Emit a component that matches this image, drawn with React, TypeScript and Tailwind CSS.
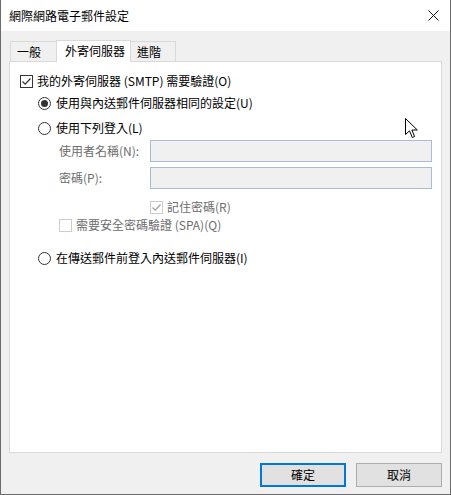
import React from "react";

const font = { fontFamily: '"Noto Sans CJK TC", "Microsoft JhengHei", sans-serif' };

const Radio = ({ checked }: { checked?: boolean }) => (
  <span className="w-[13px] h-[13px] rounded-full border border-[#333333] bg-white flex items-center justify-center shrink-0">
    {checked && <span className="w-[7px] h-[7px] rounded-full bg-[#333333]" />}
  </span>
);

const Check = ({ checked, disabled }: { checked?: boolean; disabled?: boolean }) => (
  <span
    className={`w-[13px] h-[13px] border bg-white flex items-center justify-center shrink-0 ${
      disabled ? "border-[#cccccc]" : "border-[#333333]"
    }`}
  >
    {checked && (
      <svg width="11" height="11" viewBox="0 0 11 11">
        <path d="M1.5 5.5 L4.2 8.2 L9.5 2.5" fill="none" stroke={disabled ? "#a0a0a0" : "#333"} strokeWidth="1.2" />
      </svg>
    )}
  </span>
);

export default function App() {
  return (
    <div
      className="relative w-[451px] h-[495px] bg-[#f0f0f0] text-[12px] text-black flex flex-col border-l border-r border-b border-[#6b6b6b] overflow-hidden"
      style={font}
    >
      {/* title bar */}
      <div className="h-[31px] bg-white flex items-center justify-between pl-[8px] pr-[10px] shrink-0">
        <span className="text-[12px] leading-none">網際網路電子郵件設定</span>
        <svg width="11" height="11" viewBox="0 0 11 11" className="mr-[1px]">
          <path d="M0.5 0.5 L10.5 10.5 M10.5 0.5 L0.5 10.5" stroke="#111" strokeWidth="1" />
        </svg>
      </div>

      {/* tabs */}
      <div className="flex items-end pl-[9px] pt-[8px] h-[30px] shrink-0">
        <div className="w-[48px] h-[20px] pl-[6px] flex items-center border border-b-0 border-[#d9d9d9] bg-[#f0f0f0] leading-none pt-[1px]">一般</div>
        <div className="relative z-10 w-[75px] h-[22px] mb-[-1px] pl-[8px] flex items-center border border-b-0 border-[#d9d9d9] bg-white leading-none ml-[-2px] pb-[1px]">
          外寄伺服器
        </div>
        <div className="w-[45px] h-[20px] pl-[6px] flex items-center border border-b-0 border-l-0 border-[#d9d9d9] bg-[#f0f0f0] leading-none pt-[1px]">進階</div>
      </div>

      {/* panel */}
      <div className="ml-[8px] mr-[8px] h-[392px] bg-white border border-[#d9d9d9] shrink-0 pt-[12px] pl-[10px] leading-none">
        <div className="flex items-center gap-[4px] h-[14px]">
          <Check checked />
          <span>我的外寄伺服器 (SMTP) 需要驗證(O)</span>
        </div>
        <div className="pl-[18px]">
          <div className="flex items-center gap-[5px] h-[14px] mt-[8px]">
            <Radio checked />
            <span>使用與內送郵件伺服器相同的設定(U)</span>
          </div>
          <div className="flex items-center gap-[5px] h-[14px] mt-[11px]">
            <Radio />
            <span>使用下列登入(L)</span>
          </div>
          <div className="pl-[21px] text-[#6d6d6d]">
            <div className="flex items-center mt-[5px] h-[22px]">
              <span className="w-[91px]">使用者名稱(N):</span>
              <div className="w-[282px] h-[22px] bg-[#f0f0f0] border border-[#a9bcd6]" />
            </div>
            <div className="flex items-center mt-[5px] h-[22px]">
              <span className="w-[91px]">密碼(P):</span>
              <div className="w-[282px] h-[22px] bg-[#f0f0f0] border border-[#a9bcd6]" />
            </div>
            <div className="flex items-center gap-[4px] h-[14px] mt-[11px] pl-[91px]">
              <Check checked disabled />
              <span>記住密碼(R)</span>
            </div>
            <div className="flex items-center gap-[4px] h-[14px] mt-[4px]">
              <Check disabled />
              <span>需要安全密碼驗證 (SPA)(Q)</span>
            </div>
          </div>
          <div className="flex items-center gap-[5px] h-[14px] mt-[19px]">
            <Radio />
            <span>在傳送郵件前登入內送郵件伺服器(I)</span>
          </div>
        </div>
      </div>

      {/* buttons */}
      <div className="flex justify-end gap-[10px] pr-[8px] pt-[10px]">
        <button className="w-[86px] h-[24px] bg-[#e1e1e1] border-2 border-[#0078d7] leading-none" style={font}>
          確定
        </button>
        <button className="w-[86px] h-[24px] bg-[#e1e1e1] border border-[#adadad] leading-none" style={font}>
          取消
        </button>
      </div>

      {/* mouse cursor */}
      <svg className="absolute left-[404px] top-[118px]" width="14" height="21" viewBox="0 0 14 21">
        <path d="M0.5 0.5 L0.5 16.5 L4.5 12.8 L7.3 19.5 L9.6 18.5 L6.9 12 L12.3 12 Z" fill="#fff" stroke="#000" strokeWidth="1" />
      </svg>
    </div>
  );
}
